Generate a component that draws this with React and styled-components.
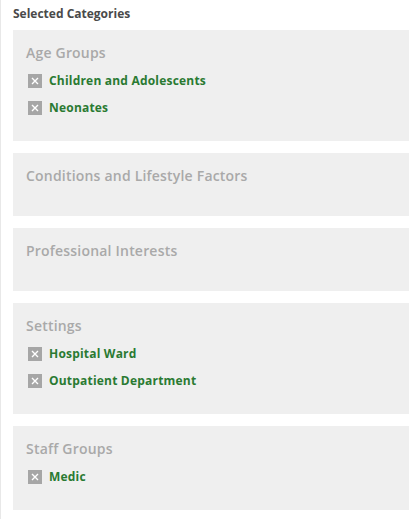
import React from "react";
import styled, { createGlobalStyle } from "styled-components";

const GlobalStyle = createGlobalStyle`
  html, body {
    margin: 0;
    padding: 0;
    background: #ffffff;
    font-family: "Open Sans", "Liberation Sans", sans-serif;
  }
`;

const Panel = styled.div`
  min-height: 100vh;
  box-sizing: border-box;
  border-left: 1px solid #e8e8e8;
  padding: 4px 11px 0 12px;
`;

const Title = styled.h3`
  margin: 0 0 6px;
  font-size: 12px;
  line-height: 20px;
  font-weight: 700;
  letter-spacing: 0;
  color: #4a4a4a;
`;

const GroupList = styled.div`
  display: flex;
  flex-direction: column;
  gap: 12px;
`;

const Group = styled.section`
  background: #efefef;
  padding: 13px 13px 20px;
`;

const GroupTitle = styled.h4`
  margin: 0 0 4px;
  font-size: 14px;
  line-height: 20px;
  font-weight: 600;
  letter-spacing: 0.2px;
  color: #a9a9a9;
`;

const Items = styled.ul`
  list-style: none;
  margin: 0;
  padding: 0 0 0 2px;
  min-height: 6px;
`;

const Item = styled.li`
  display: flex;
  align-items: center;
  gap: 7px;
  height: 27px;
  font-size: 12px;
  font-weight: 700;
  letter-spacing: 0.2px;
  color: #2a7a32;
`;

const Remove = styled.span`
  display: inline-flex;
  align-items: center;
  justify-content: center;
  width: 14px;
  height: 14px;
  background: #a6a6a6;
  flex-shrink: 0;

  svg {
    width: 8px;
    height: 8px;
  }
`;

const groups = [
  { name: "Age Groups", items: ["Children and Adolescents", "Neonates"] },
  { name: "Conditions and Lifestyle Factors", items: [] },
  { name: "Professional Interests", items: [] },
  { name: "Settings", items: ["Hospital Ward", "Outpatient Department"] },
  { name: "Staff Groups", items: ["Medic"] },
];

function CrossBox() {
  return (
    <Remove>
      <svg viewBox="0 0 8 8" fill="none" stroke="#ffffff" strokeWidth="1.4">
        <path d="M1 1l6 6M7 1l-6 6" />
      </svg>
    </Remove>
  );
}

export default function App() {
  return (
    <>
      <GlobalStyle />
      <Panel>
        <Title>Selected Categories</Title>
        <GroupList>
          {groups.map((g) => (
            <Group key={g.name}>
              <GroupTitle>{g.name}</GroupTitle>
              <Items>
                {g.items.map((it) => (
                  <Item key={it}>
                    <CrossBox />
                    {it}
                  </Item>
                ))}
              </Items>
            </Group>
          ))}
        </GroupList>
      </Panel>
    </>
  );
}
